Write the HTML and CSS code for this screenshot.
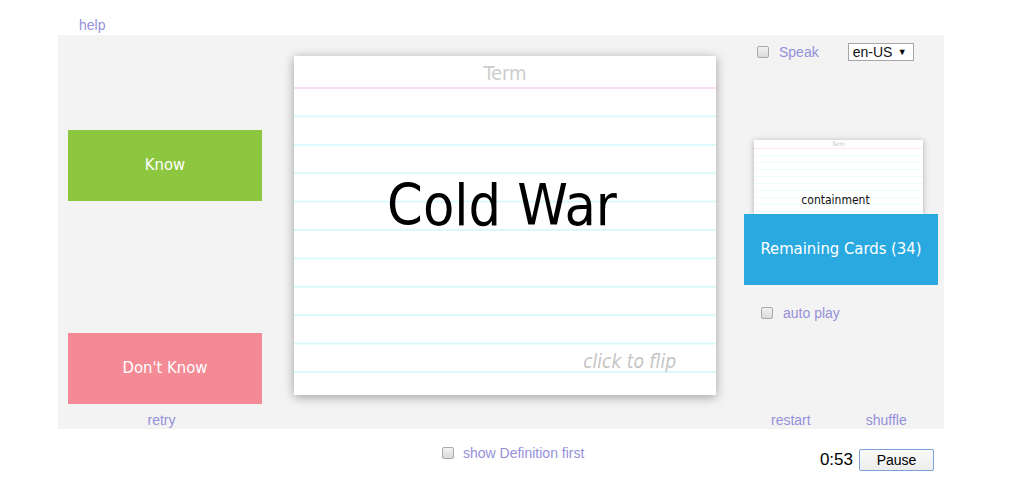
FILE: index.html
```html
<!DOCTYPE html>
<html lang="en">
<head>
    <meta charset="UTF-8">
    <meta name="viewport" content="width=device-width, initial-scale=1.0">
    <title>Flashcards</title>
    <link rel="stylesheet" href="styles.css">
</head>
<body>

<div class="page">
    <a class="link help" href="#">help</a>

    <div class="panel">
        <!-- Answer buttons -->
        <div class="left-col">
            <button class="btn know">Know</button>
            <button class="btn dont-know">Don't Know</button>
            <div class="center-link"><a class="link" href="#">retry</a></div>
        </div>

        <!-- Main flashcard -->
        <div class="card">
            <div class="card-head">Term</div>
            <div class="card-body">
                <div class="card-text">Cold War</div>
                <div class="flip-hint">click to flip</div>
            </div>
        </div>

        <!-- Deck controls -->
        <div class="right-col">
            <div class="speak-row">
                <label class="check">
                    <input type="checkbox">
                    <span class="link">Speak</span>
                </label>
                <span class="lang-wrap">
                    <select class="lang"><option>en-US</option></select>
                </span>
            </div>

            <div class="mini-card">
                <div class="mini-head">Term</div>
                <div class="mini-body">containment</div>
            </div>
            <button class="btn remaining">Remaining Cards (34)</button>

            <label class="check auto-play">
                <input type="checkbox">
                <span class="link">auto play</span>
            </label>

            <div class="links-row">
                <a class="link" href="#">restart</a>
                <a class="link" href="#">shuffle</a>
            </div>
        </div>
    </div>

    <div class="bottom-row">
        <label class="check def-first">
            <input type="checkbox">
            <span class="link">show Definition first</span>
        </label>
        <div class="timer">
            <span class="time">0:53</span>
            <button class="pause">Pause</button>
        </div>
    </div>
</div>

</body>
</html>
```

FILE: styles.css
```css
body {
    margin: 0;
    background: #fff;
    font-family: "Liberation Sans", Arial, sans-serif;
    font-size: 14px;
}

.page {
    width: 1024px;
    height: 488px;
    overflow: hidden;
}

/* Purple text links */
.link {
    color: #9590d9;
    text-decoration: none;
    font-size: 14px;
    line-height: 16px;
}

.help {
    display: block;
    margin: 17px 0 2px 79px;
    width: 30px;
}

/* Grey play area */
.panel {
    display: flex;
    margin-left: 58px;
    width: 886px;
    height: 394px;
    background-color: #f3f3f3;
}

.left-col,
.right-col {
    display: flex;
    flex-direction: column;
    width: 194px;
    padding-bottom: 1px;
}

.left-col {
    margin-left: 10px;
    padding-top: 95px;
}

.right-col {
    margin-left: 28px;
    padding-top: 8px;
}

/* Big coloured buttons */
.btn {
    display: block;
    width: 194px;
    height: 71px;
    border: none;
    color: #fff;
    font-family: "DejaVu Sans Condensed", "DejaVu Sans", sans-serif;
    font-stretch: condensed;
    font-size: 16.5px;
    padding: 0 0 3px;
}

.know {
    background-color: #8dc63f;
}

.dont-know {
    margin-top: 132px;
    background-color: #f48a95;
}

.center-link {
    margin-top: auto;
    padding-right: 7px;
    text-align: center;
}

/* Flashcard */
.card {
    display: flex;
    flex-direction: column;
    margin: 21px 0 0 32px;
    width: 422px;
    height: 339px;
    background: #fff;
    box-shadow: 0 2px 10px rgba(0, 0, 0, 0.35);
    font-family: "DejaVu Sans Condensed", "DejaVu Sans", sans-serif;
    font-stretch: condensed;
}

.card-head {
    height: 31px;
    border-bottom: 2px solid #fcdcf4;
    text-align: center;
    color: #cdcdcd;
    font-size: 20px;
    line-height: 34px;
}

.card-body {
    flex: 1;
    display: flex;
    flex-direction: column;
    background-image: linear-gradient(to bottom, transparent 26px, #d9f9fb 26px);
    background-size: 100% 28.4px;
}

.card-text {
    margin-top: 83px;
    padding-right: 6px;
    text-align: center;
    font-size: 57px;
    line-height: 67px;
    color: #000;
}

.flip-hint {
    margin-top: auto;
    padding: 0 40px 22px 0;
    text-align: right;
    font-style: italic;
    font-size: 19px;
    line-height: 23px;
    color: #c4c4c4;
}

/* Checkbox rows */
.check {
    display: flex;
    align-items: center;
}

.check input {
    appearance: none;
    -webkit-appearance: none;
    margin: 0 10px 0 0;
    width: 12px;
    height: 12px;
    border: 1px solid #a9a9a9;
    border-radius: 2px;
    background: linear-gradient(#f2f2f2, #dadada);
}

.speak-row {
    display: flex;
    align-items: center;
    height: 18px;
}

.speak-row .check {
    margin-left: 13px;
}

.lang-wrap {
    position: relative;
    margin-left: 29px;
}

.lang-wrap::after {
    content: "\25BC";
    position: absolute;
    right: 7px;
    top: 4px;
    font-size: 9px;
    color: #000;
    pointer-events: none;
}

.lang {
    appearance: none;
    -webkit-appearance: none;
    display: block;
    width: 66px;
    height: 18px;
    padding: 0 0 0 4px;
    border: 1px solid #a6a6a6;
    border-radius: 0;
    background: #fff;
    font-family: "Liberation Sans", Arial, sans-serif;
    font-size: 14px;
    color: #111;
}

/* Preview of next card */
.mini-card {
    margin: 79px 0 0 10px;
    width: 169px;
    height: 74px;
    background: #fff;
    box-shadow: 0 1px 6px rgba(0, 0, 0, 0.3);
    font-family: "DejaVu Sans Condensed", "DejaVu Sans", sans-serif;
    font-stretch: condensed;
}

.mini-head {
    height: 8px;
    border-bottom: 1px solid #fde6f7;
    text-align: center;
    font-size: 6px;
    line-height: 8px;
    color: #c8c8c8;
}

.mini-body {
    height: 65px;
    padding: 43px 6px 0 0;
    box-sizing: border-box;
    text-align: center;
    font-size: 12px;
    line-height: 16px;
    color: #111;
    background-image: linear-gradient(to bottom, transparent 6px, #ecfcfd 6px);
    background-size: 100% 7px;
}

.remaining {
    position: relative;
    z-index: 1;
    background-color: #29a9e0;
}

.auto-play {
    margin: 20px 0 0 17px;
    height: 16px;
}

.links-row {
    display: flex;
    margin: auto 0 0 27px;
    gap: 55px;
}

/* Below the panel */
.bottom-row {
    display: flex;
    align-items: flex-start;
    width: 934px;
}

.def-first {
    margin: 16px 0 0 442px;
    height: 16px;
}

.def-first input {
    margin-right: 9px;
}

.timer {
    display: flex;
    align-items: center;
    margin: 20px 0 0 auto;
}

.time {
    font-size: 17px;
    color: #000;
    margin-right: 6px;
}

.pause {
    width: 75px;
    height: 22px;
    padding: 0;
    border: 1px solid #7ca0d4;
    border-radius: 2px;
    background: linear-gradient(#fafafa, #ececec);
    font-family: "Liberation Sans", Arial, sans-serif;
    font-size: 14px;
    color: #000;
}
```
